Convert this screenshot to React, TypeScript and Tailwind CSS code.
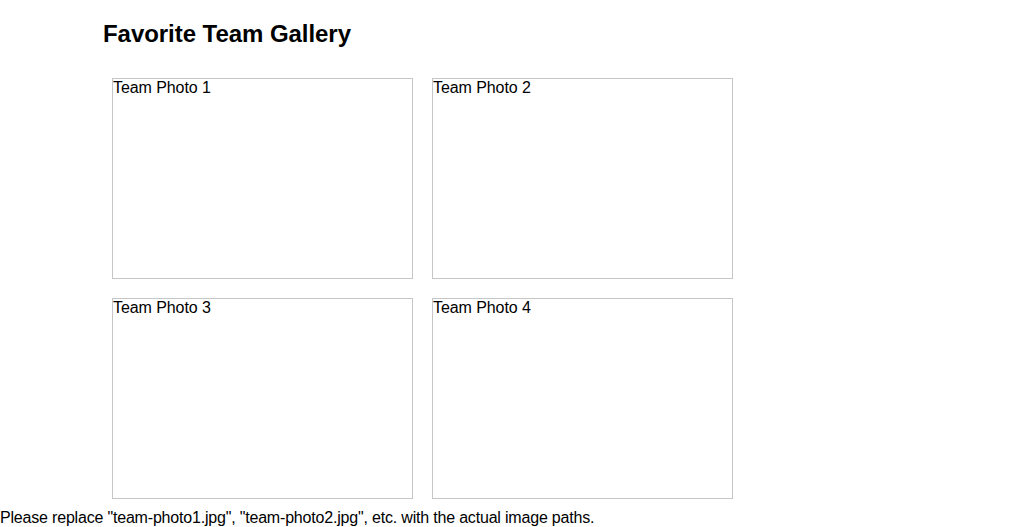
export default function App() {
  const photos = ["Team Photo 1", "Team Photo 2", "Team Photo 3", "Team Photo 4"];
  return (
    <div className="min-h-[527px] bg-white text-black" style={{ fontFamily: '"Liberation Sans", Arial, sans-serif' }}>
      <h2 className="pl-[103px] pt-[20px] text-[24px] font-bold leading-[28px] tracking-[-0.05px]">Favorite Team Gallery</h2>
      <div className="ml-[112px] mt-[30px] grid grid-cols-[301px_301px] gap-[19px]">
        {photos.map((p) => (
          <div key={p} className="h-[201px] border border-[#c6c6c6] pt-[1px] text-[16px] leading-none tracking-[-0.08px]">
            {p}
          </div>
        ))}
      </div>
      <p className="mt-[10px] text-[16px] leading-[18px] tracking-[-0.19px]">
        Please replace "team-photo1.jpg", "team-photo2.jpg", etc. with the actual image paths.
      </p>
    </div>
  );
}
